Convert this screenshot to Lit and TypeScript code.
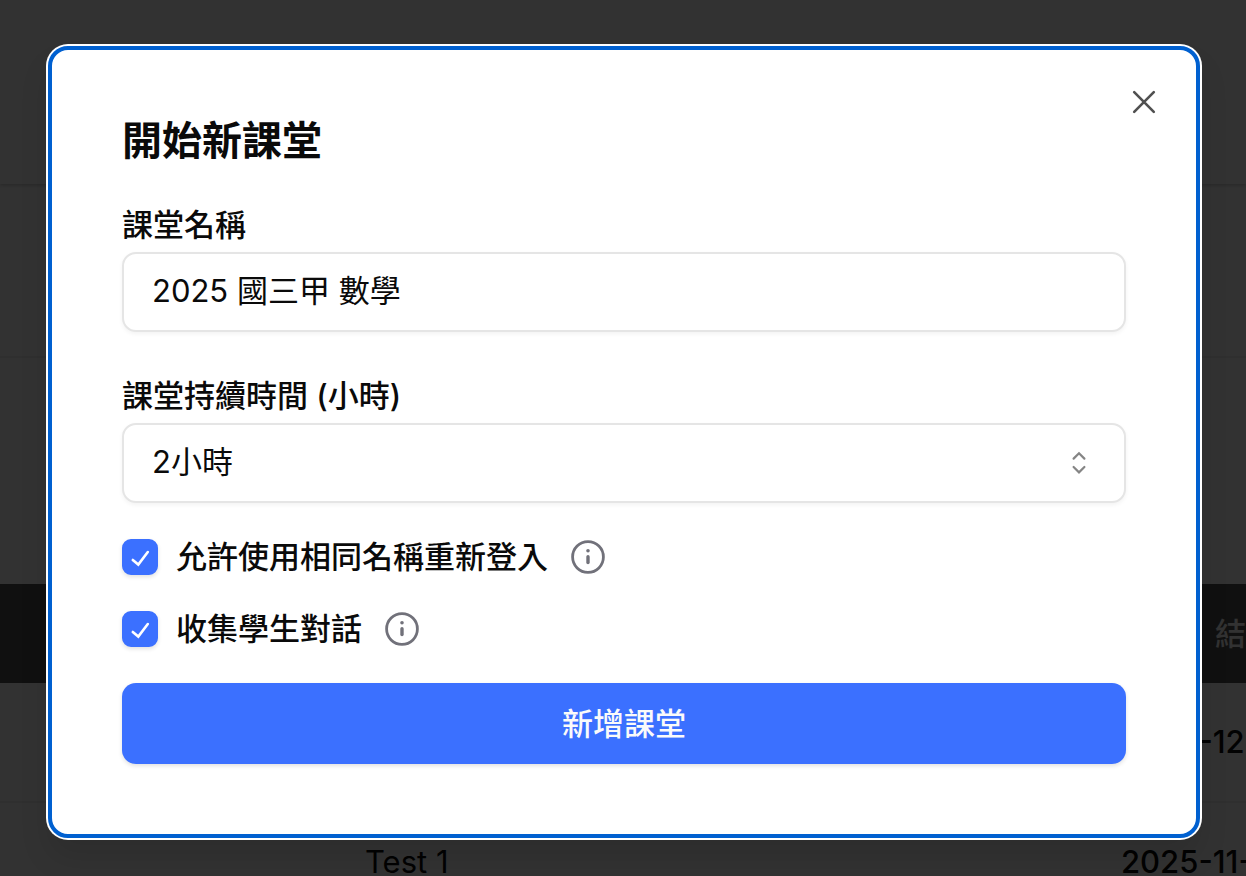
import { LitElement, html, css } from "lit";
import { customElement, state } from "lit/decorators.js";

const infoIcon = html`<svg class="info-icon" viewBox="0 0 36 36" aria-hidden="true">
  <circle cx="18" cy="18" r="15.4" fill="none" stroke="#71717a" stroke-width="2.8" />
  <circle cx="18" cy="11.8" r="1.8" fill="#71717a" />
  <path d="M18 17.8V23.6" fill="none" stroke="#71717a" stroke-width="3.4" stroke-linecap="round" />
</svg>`;

@customElement("app-root")
export class AppRoot extends LitElement {
  @state() private allowRejoin = true;
  @state() private collectChats = true;

  static styles = css`
    :host {
      display: block;
      position: relative;
      min-height: 100vh;
      box-sizing: border-box;
      font-family: Inter, "Noto Sans CJK TC", sans-serif;
      font-size: 31px;
      line-height: 32px;
      color: #0a0a0a;
    }
    * {
      box-sizing: border-box;
    }
    .page {
      height: 100vh;
      overflow: hidden;
      background: #fafafa;
    }
    .topbar {
      height: 184px;
      box-shadow: 0 1px 4px rgba(0, 0, 0, 0.25);
    }
    .toolbar {
      height: 174px;
      border-bottom: 2px solid #ececec;
    }
    .spacer {
      height: 226px;
    }
    .records {
      width: 100%;
      table-layout: fixed;
      border-collapse: collapse;
      white-space: nowrap;
    }
    .records th {
      height: 99px;
      padding: 0;
      background: #505050;
      color: #fafafa;
      font-weight: 500;
      text-align: left;
    }
    .records td {
      height: 119px;
      padding: 0;
      border-bottom: 2px solid #e8e8e8;
      color: #0a0a0a;
      text-align: left;
    }
    .records .name {
      padding-left: 365px;
    }
    .records .date {
      width: 125px;
      font-weight: 500;
    }
    .records th.date {
      padding-left: 94px;
    }
    .overlay {
      position: absolute;
      inset: 0;
      display: flex;
      align-items: flex-start;
      padding: 46px 46px 38px 48px;
      background: rgba(0, 0, 0, 0.8);
    }
    .modal {
      position: relative;
      flex: 1;
      min-width: 0;
      display: flex;
      flex-direction: column;
      gap: 36px;
      padding: 70px;
      border: 4px solid #0060d0;
      border-radius: 20px;
      background: #ffffff;
      box-shadow: 0 0 0 2px #ffffff, 0 20px 30px rgba(0, 0, 0, 0.1);
    }
    .fields {
      display: flex;
      flex-direction: column;
      gap: 48px;
    }
    .title {
      margin: 0;
      font-size: 40px;
      line-height: 41px;
      font-weight: 600;
    }
    .field {
      display: flex;
      flex-direction: column;
      gap: 11px;
    }
    .label {
      font-weight: 500;
    }
    .control {
      display: block;
      width: 100%;
      height: 80px;
      margin: 0;
      padding: 0 28px 2px;
      border: 2px solid #e5e5e5;
      border-radius: 14px;
      background: #ffffff;
      color: #0a0a0a;
      font: inherit;
      box-shadow: 0 2px 4px rgba(0, 0, 0, 0.05);
      appearance: none;
      outline: none;
    }
    input.control {
      padding-bottom: 8px;
    }
    .select-wrap {
      display: grid;
      align-items: center;
    }
    .select-wrap > * {
      grid-area: 1 / 1;
    }
    .carets {
      justify-self: end;
      width: 36px;
      height: 36px;
      margin-right: 29px;
      pointer-events: none;
    }
    .option {
      display: flex;
      align-items: center;
      height: 36px;
    }
    .tick {
      display: grid;
      margin-right: 18px;
    }
    .tick > * {
      grid-area: 1 / 1;
      width: 36px;
      height: 36px;
    }
    .box {
      appearance: none;
      margin: 0;
      border: 2px solid #3b70ff;
      border-radius: 9px;
      background: #ffffff;
      box-shadow: 0 2px 4px rgba(0, 0, 0, 0.12);
    }
    .box:checked {
      background: #3b70ff;
    }
    .tick-icon {
      pointer-events: none;
    }
    .info {
      display: flex;
      margin-left: 22px;
      padding: 0;
      border: 0;
      background: none;
    }
    .info-icon {
      width: 36px;
      height: 36px;
    }
    .submit {
      height: 81px;
      padding: 0;
      border: 0;
      border-radius: 14px;
      background: #3b70ff;
      color: #fafafa;
      font: inherit;
      font-weight: 500;
      box-shadow: 0 2px 4px rgba(0, 0, 0, 0.12);
    }
    .close {
      position: absolute;
      top: 34px;
      right: 34px;
      display: flex;
      padding: 0;
      border: 0;
      background: none;
    }
    .close-icon {
      width: 36px;
      height: 36px;
    }
  `;

  private renderTick(id: string, checked: boolean, onChange: (value: boolean) => void) {
    return html`<span class="tick">
      <input
        class="box"
        type="checkbox"
        id=${id}
        .checked=${checked}
        @change=${(e: Event) => onChange((e.target as HTMLInputElement).checked)}
      />
      ${checked
        ? html`<svg class="tick-icon" viewBox="0 0 36 36" aria-hidden="true">
            <path d="M10.8 21L16.3 25.6L25.8 13" fill="none" stroke="#fff" stroke-width="2.6" stroke-linecap="round" stroke-linejoin="miter" />
          </svg>`
        : null}
    </span>`;
  }

  render() {
    return html`
      <div class="page" inert>
        <div class="topbar"></div>
        <div class="toolbar"></div>
        <div class="spacer"></div>
        <table class="records">
          <thead>
            <tr><th class="name"></th><th class="date">結</th></tr>
          </thead>
          <tbody>
            <tr><td class="name"></td><td class="date">2025-12</td></tr>
            <tr><td class="name">Test 1</td><td class="date">2025-11-</td></tr>
          </tbody>
        </table>
      </div>
      <div class="overlay">
        <form class="modal" role="dialog" aria-modal="true" aria-labelledby="title" @submit=${(e: Event) => e.preventDefault()}>
          <div class="fields">
            <h2 class="title" id="title">開始新課堂</h2>
            <div class="field">
              <label class="label" for="name">課堂名稱</label>
              <input class="control" id="name" type="text" value="2025 國三甲 數學" />
            </div>
            <div class="field">
              <label class="label" for="duration">課堂持續時間 (小時)</label>
              <div class="select-wrap">
                <select class="control" id="duration">
                  <option>2小時</option>
                </select>
                <svg class="carets" viewBox="0 0 36 36" aria-hidden="true">
                  <path d="M12.6 13.6L18 8.2L23.4 13.6M12.6 22L18 27.4L23.4 22" fill="none" stroke="#858585" stroke-width="2.2" stroke-linecap="round" />
                </svg>
              </div>
            </div>
          </div>
          <div class="option">
            ${this.renderTick("rejoin", this.allowRejoin, (v) => (this.allowRejoin = v))}
            <label class="label" for="rejoin">允許使用相同名稱重新登入</label>
            <button class="info" type="button">${infoIcon}</button>
          </div>
          <div class="option">
            ${this.renderTick("collect", this.collectChats, (v) => (this.collectChats = v))}
            <label class="label" for="collect">收集學生對話</label>
            <button class="info" type="button">${infoIcon}</button>
          </div>
          <button class="submit" type="submit">新增課堂</button>
          <button class="close" type="button">
            <svg class="close-icon" viewBox="0 0 36 36" aria-hidden="true">
              <path d="M8.2 8.2L27.8 27.8M27.8 8.2L8.2 27.8" fill="none" stroke="#505050" stroke-width="2.6" stroke-linecap="round" />
            </svg>
          </button>
        </form>
      </div>
    `;
  }
}
